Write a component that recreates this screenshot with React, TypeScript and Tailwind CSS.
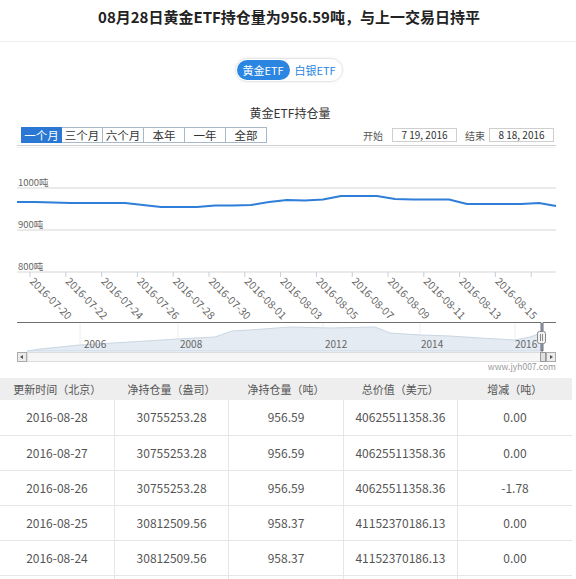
const rows = [
  ["2016-08-28", "30755253.28", "956.59", "40625511358.36", "0.00"],
  ["2016-08-27", "30755253.28", "956.59", "40625511358.36", "0.00"],
  ["2016-08-26", "30755253.28", "956.59", "40625511358.36", "-1.78"],
  ["2016-08-25", "30812509.56", "958.37", "41152370186.13", "0.00"],
  ["2016-08-24", "30812509.56", "958.37", "41152370186.13", "0.00"],
  ["", "", "", "", ""],
];

const heads = ["更新时间（北京）", "净持仓量（盎司）", "净持仓量（吨）", "总价值（美元）", "增减（吨）"];
const ranges = ["一个月", "三个月", "六个月", "本年", "一年", "全部"];

const linePts =
  "17,202 35,202 53,202.5 71,203 89,203 107,203 125,203 143,205 161,207 179,207 197,207 215,205.5 233,205.5 251,205 269,202 287,200 305,200.5 323,199.5 341,196 359,196 377,196 395,199 413,199.5 431,199.5 449,199.5 467,204 485,204 503,204 521,204 539,203 556,206";

const areaPts =
  "27,351 40,349 80,345 130,342 178,339 215,337 232,331 250,330 290,327 330,328 375,327 390,333 420,335 450,336 480,338 515,340 530,337 541,333 541,351";

const xLabels = [
  "2016-07-20", "2016-07-22", "2016-07-24", "2016-07-26", "2016-07-28", "2016-07-30",
  "2016-08-01", "2016-08-03", "2016-08-05", "2016-08-07", "2016-08-09", "2016-08-11",
  "2016-08-13", "2016-08-15",
];

const Chart = () => {
  return (
    <svg width="576" height="230" viewBox="0 147 576 230" className="block" fontFamily="'Noto Sans CJK SC', sans-serif">
      {/* grid */}
      {[188, 230, 272].map((y) => (
        <line key={y} x1="17" x2="556" y1={y} y2={y} stroke="#d6d6d6" strokeWidth="1" />
      ))}
      <text x="18" y="186" fontSize="9.5" fill="#666">1000吨</text>
      <text x="18" y="228" fontSize="9.5" fill="#666">900吨</text>
      <text x="18" y="270" fontSize="9.5" fill="#666">800吨</text>
      <polyline points={linePts} fill="none" stroke="#2f7ed8" strokeWidth="2" strokeLinejoin="round" />
      {Array.from({ length: 15 }).map((_, i) => {
        const x = 30 + i * 35.8;
        return <line key={i} x1={x} x2={x} y1="272" y2="277" stroke="#c0d0e0" />;
      })}
      {xLabels.map((t, i) => {
        const x = 29 + i * 35.8;
        return (
          <text key={t} x={x} y="282" fontSize="10.5" fill="#666" transform={`rotate(45 ${x} 282)`}>
            {t}
          </text>
        );
      })}

      {/* navigator */}
      {[80, 178, 323, 420, 515].map((x) => (
        <line key={x} x1={x} x2={x} y1="323" y2="351" stroke="#eeeeee" />
      ))}
      <polygon points={areaPts} fill="#e4ebf3" stroke="#c9d6e3" strokeWidth="1" />
      <rect x="541" y="323" width="2" height="28" fill="#8fa6c4" />
      <polyline points="17,322.5 541,322.5 541,351 543,351 543,322.5 556,322.5" fill="none" stroke="#707070" strokeWidth="1" />
      <text x="84" y="348" fontSize="10" fill="#666">2006</text>
      <text x="180" y="348" fontSize="10" fill="#666">2008</text>
      <text x="325" y="348" fontSize="10" fill="#666">2012</text>
      <text x="421" y="348" fontSize="10" fill="#666">2014</text>
      <text x="515" y="348" fontSize="10" fill="#666">2016</text>
      <rect x="537.5" y="331.5" width="8" height="12" rx="2" fill="#f2f2f2" stroke="#888" />
      <line x1="540.5" x2="540.5" y1="334" y2="341" stroke="#888" />
      <line x1="542.5" x2="542.5" y1="334" y2="341" stroke="#888" />

      {/* scrollbar */}
      <rect x="27.5" y="352.5" width="519" height="9" fill="#f6f6f6" stroke="#dddddd" />
      <rect x="17.5" y="352.5" width="9" height="9" fill="#ececec" stroke="#aaaaaa" />
      <polygon points="23,355 20,357 23,359" fill="#555" />
      <rect x="546.5" y="352.5" width="9" height="9" fill="#ececec" stroke="#aaaaaa" />
      <polygon points="550,355 553,357 550,359" fill="#555" />
      <rect x="540.5" y="352.5" width="5" height="9" fill="#e0e0e0" stroke="#999" />
      <text x="556" y="370" fontSize="8.5" fill="#999" textAnchor="end">www.jyh007.com</text>
    </svg>
  );
};

const App = () => {
  return (
    <div className="w-[576px] h-[579px] overflow-hidden bg-white font-['Noto_Sans_CJK_SC',sans-serif] text-[#333]">
      {/* Header */}
      <div className="h-[42px] border-b border-[#eeeeee] flex justify-center items-center pb-[6px]">
        <h1 className="text-[15px] font-bold text-[#222] pl-[2px]">
          08月28日黄金ETF持仓量为956.59吨，与上一交易日持平
        </h1>
      </div>

      {/* Toggle */}
      <div className="flex justify-center mt-[16px] pl-[1px]">
        <div className="flex items-center h-[24px] w-[108px] rounded-full border border-[#e6e6e6] shadow-[0_0_3px_rgba(0,0,0,0.08)] p-[1px]">
          <div className="h-full w-[53px] rounded-full bg-[#2a86e0] text-white text-[11px] flex items-center justify-center">
            黄金ETF
          </div>
          <div className="flex-1 text-[#2a86e0] text-[11px] text-center">白银ETF</div>
        </div>
      </div>

      {/* Chart title */}
      <div className="mt-[23px] text-center text-[12px] leading-[16px] text-[#333] pl-[4px]">黄金ETF持仓量</div>

      {/* Range buttons + dates */}
      <div className="ml-[17px] w-[539px] mt-[6px]">
        <div className="flex items-center justify-between pl-[4px] pr-[2px]">
          <div className="flex">
            {ranges.map((r, i) => (
              <div
                key={r}
                className={
                  i === 0
                    ? "w-[41px] h-[16px] bg-[#2b78d4] border border-[#2b78d4] text-white text-[11.5px] leading-[14px] text-center"
                    : "w-[41px] h-[16px] bg-white border border-l-0 border-[#a9b8c8] text-[#333] text-[11.5px] leading-[14px] text-center"
                }
              >
                {r}
              </div>
            ))}
          </div>
          <div className="flex items-center text-[10px] text-[#555]">
            <span>开始</span>
            <div className="ml-[9px] w-[65px] h-[14px] border border-[#cfcfcf] text-[10px] leading-[12px] text-center text-[#333]">
              7 19, 2016
            </div>
            <span className="ml-[8px]">结束</span>
            <div className="ml-[4px] w-[65px] h-[14px] border border-[#cfcfcf] text-[10px] leading-[12px] text-center text-[#333]">
              8 18, 2016
            </div>
          </div>
        </div>
        <div className="mt-[2px] h-[2px] border-t border-[#d0d0d0] shadow-[0_1px_1px_rgba(0,0,0,0.06)]" />
      </div>

      <Chart />

      {/* Table */}
      <table className="mt-[1px] w-[572px] table-fixed border-collapse text-center">
        <thead>
          <tr className="h-[22px] bg-[#eeeeee]">
            {heads.map((h) => (
              <th key={h} className="font-normal text-[11px] text-[#555] p-0">
                {h}
              </th>
            ))}
          </tr>
        </thead>
        <tbody>
          {rows.map((r, i) => (
            <tr key={i} className="h-[35px] border-b border-[#e6e6e6]">
              {r.map((c, j) => (
                <td key={j} className={`text-[12px] text-[#555] p-0 ${j < 4 ? "border-r border-[#e6e6e6]" : ""}`}>
                  {c}
                </td>
              ))}
            </tr>
          ))}
        </tbody>
      </table>
    </div>
  );
};

export default App;
